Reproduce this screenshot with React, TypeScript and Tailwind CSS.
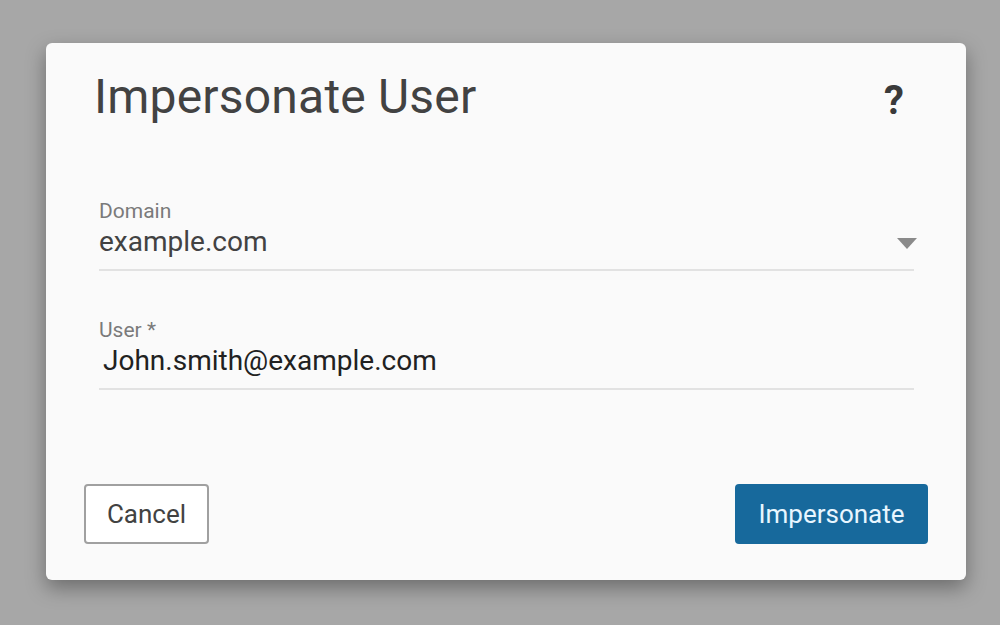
import React from 'react';

export default function App() {
  return (
    <div className="w-[1000px] h-[625px] bg-[#a7a7a7] pt-[43px] pl-[46px]" style={{ fontFamily: 'Roboto, "Noto Sans", sans-serif' }}>
      <div className="w-[920px] h-[537px] bg-[#fafafa] rounded-[6px] shadow-[0_8px_20px_rgba(0,0,0,0.35)] flex flex-col">
        <div className="flex items-start justify-between h-[56px] pl-[48px] pr-[62px] mt-[26px]">
          <h1 className="text-[48px] leading-[56px] text-[#424242] tracking-[0.2px]">Impersonate User</h1>
          <span className="text-[40px] leading-[48px] font-bold text-[#3a3a3a] mt-[8px]">?</span>
        </div>

        <div className="pl-[53px] pr-[52px] mt-[74px] flex flex-col">
          <div className="flex flex-col border-b-2 border-[#e2e2e2] pb-[8px]">
            <span className="text-[21px] leading-[24px] text-[#7a7a7a]">Domain</span>
            <div className="flex items-center justify-between h-[38px]">
              <span className="text-[28px] leading-[34px] text-[#424242]">example.com</span>
              <svg width="20" height="11" viewBox="0 0 20 11" className="mr-[-3px] mt-[3px]">
                <path d="M0 0 H20 L10 11 Z" fill="#8a8a8a" />
              </svg>
            </div>
          </div>

          <div className="flex flex-col border-b-2 border-[#e2e2e2] pb-[8px] mt-[47px]">
            <span className="text-[21px] leading-[24px] text-[#7a7a7a]">User *</span>
            <div className="flex items-center h-[38px] pl-[4px]">
              <span className="text-[28px] leading-[34px] text-[#212121]">John.smith@example.com</span>
            </div>
          </div>
        </div>

        <div className="flex justify-between pl-[38px] pr-[38px] mt-auto mb-[36px]">
          <button className="w-[125px] h-[60px] border-2 border-[#a0a0a0] rounded-[4px] bg-white text-[26px] text-[#424242]">Cancel</button>
          <button className="w-[193px] h-[60px] rounded-[4px] bg-[#17699c] text-[26px] text-[#e8f6ff]">Impersonate</button>
        </div>
      </div>
    </div>
  );
}
